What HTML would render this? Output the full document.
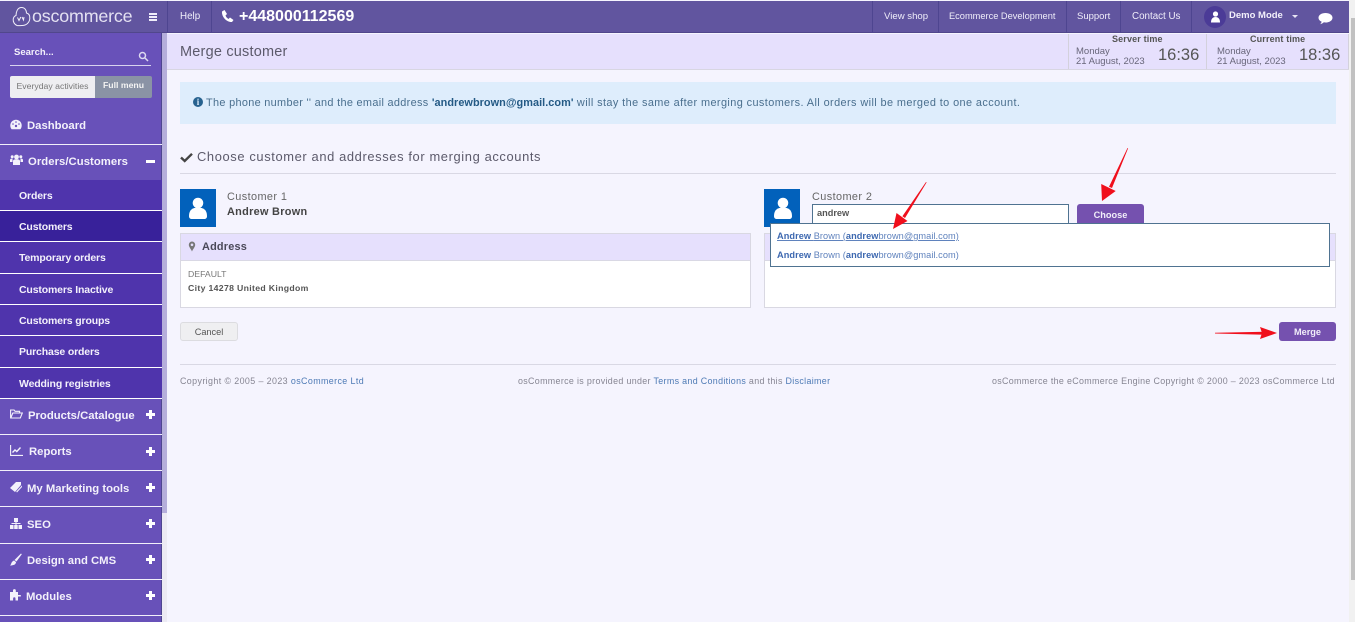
<!DOCTYPE html>
<html><head><meta charset="utf-8"><title>Merge customer</title>
<style>
*{box-sizing:border-box}
html,body{margin:0;padding:0;width:1355px;height:622px;overflow:hidden;background:#f5f4fe;font-family:"Liberation Sans",sans-serif;color:#555}
.a{position:absolute;white-space:nowrap}
#top{left:0;top:1px;width:1349px;height:32px;background:#61559f;border-bottom:1px solid #51478c}
.v{position:absolute;top:1px;width:1px;height:32px;background:#4e4590}
.tl{position:absolute;top:11px;font-size:10px;color:#f0eefa;line-height:12px;white-space:nowrap}
#side{left:0;top:33px;width:162px;height:589px;background:#6851b9;border-right:1px solid #4e4590}
.sub{position:absolute;left:0;width:162px;background:#4f34ac;border-bottom:1px solid #fff;color:#f3f1fb;font-weight:bold;font-size:10.5px;padding:1px 0 0 19px;white-space:nowrap;letter-spacing:-.15px}
.sep{position:absolute;left:0;width:162px;height:1px;background:#f2f0fa}
.mt{position:absolute;left:27px;color:#f3f1fb;font-weight:bold;font-size:11.3px;line-height:14px;white-space:nowrap}
.plus{position:absolute;left:146px;width:9px;height:9px}
.plus:before{content:"";position:absolute;left:0;top:3px;width:9px;height:3px;background:#fff}
.plus:after{content:"";position:absolute;left:3px;top:0;width:3px;height:9px;background:#fff}
.ic{position:absolute;left:10px}
.panel{position:absolute;border:1px solid #d9d8e2;background:#fff}
a,.lk{color:#4d7ab5;text-decoration:none}
.ava{position:absolute;width:36px;height:38px;background:#0261bb}
</style></head><body>

<div class="a" id="top"></div>
<div class="v" style="left:167px"></div><div class="v" style="left:211px"></div>
<div class="v" style="left:872px"></div><div class="v" style="left:938px"></div><div class="v" style="left:1066px"></div><div class="v" style="left:1120px"></div><div class="v" style="left:1191px"></div>

<svg class="a" style="left:12px;top:6px" width="19" height="21" viewBox="0 0 19 21" fill="none" stroke="#f2f0fa" stroke-width="1"><path d="M5 19.500C2.500 18.500 1 16 1.200 13.500C1.400 11.500 2.600 10 4 9.500C4 6 5.500 1.500 9.500 1.500C13 1.500 14.500 4.500 14.500 7C16.800 7.500 18 9.500 17.800 12.500C17.500 16.500 14.500 19.500 10 19.500C8 19.500 6.500 19.800 5 19.500Z"/><path d="M5.500 11.500l1.500 3 1.800-3.500M10 11l1.500 3 .5-3" stroke-width="1"/></svg>
<div class="a" style="left:32px;top:5px;font-size:17.900px;line-height:22px;color:#e4e1f2;letter-spacing:-.2px">oscommerce</div>
<div class="a" style="left:149px;top:13px;width:8px;height:2px;background:#f0eefa"></div>
<div class="a" style="left:149px;top:16px;width:8px;height:2px;background:#f0eefa"></div>
<div class="a" style="left:149px;top:19px;width:8px;height:2px;background:#f0eefa"></div>
<div class="tl" style="left:180px;font-size:9.800px">Help</div>
<svg class="a" style="left:221px;top:9px" width="13" height="14" viewBox="0 0 13 14"><path d="M1 2.500L3.500 1L6 5L4.500 6.500C5 8 6 9 7.500 10L9 8.500L12.500 11L11 13C6 13.500 .5 8 1 2.500Z" fill="#fff"/></svg>
<div class="a" style="left:239px;top:7px;font-size:16px;line-height:19px;font-weight:bold;color:#fff">+448000112569</div>
<div class="tl" style="left:884px;font-size:9.600px">View shop</div>
<div class="tl" style="left:949px;top:10px;font-size:9.250px">Ecommerce Development</div>
<div class="tl" style="left:1077px;font-size:9.500px">Support</div>
<div class="tl" style="left:1132px;font-size:9.800px">Contact Us</div>
<div class="a" style="left:1204px;top:6px;width:22px;height:22px;border-radius:50%;background:#4b3b97"></div>
<svg class="a" style="left:1210px;top:11px" width="11" height="12" viewBox="0 0 11 12"><circle cx="5.500" cy="3" r="2.600" fill="#fff"/><path d="M1 11.500C1 8 2.500 6 5.500 6S10 8 10 11.500Z" fill="#fff"/></svg>
<div class="a" style="left:1229px;top:10px;font-size:9.500px;line-height:12px;font-weight:bold;color:#f3f1fb">Demo Mode</div>
<div class="a" style="left:1292px;top:15px;border:3px solid transparent;border-top:3px solid #e8e5f4"></div>
<svg class="a" style="left:1318px;top:12px" width="15" height="13" viewBox="0 0 15 13"><path d="M7.500 1C11.500 1 14.500 3 14.500 5.700S11.500 10.500 7.500 10.500C6.800 10.500 6.200 10.400 5.800 10.300C4.700 11.300 3.500 12 2.200 12.200C3 11.300 3.500 10.400 3.600 9.600C1.600 8.800 .5 7.400 .5 5.700C.5 3 3.500 1 7.500 1Z" fill="#fff"/></svg>

<div class="a" id="side"></div>
<div class="a" style="left:162px;top:33px;width:5px;height:480px;background:#b5aedb"></div>
<div class="a" style="left:162px;top:513px;width:5px;height:109px;background:#eceaf3"></div>

<div class="a" style="left:14px;top:47px;font-size:9.500px;line-height:12px;font-weight:bold;color:#f3f1fb">Search...</div>
<svg class="a" style="left:138px;top:51px" width="11" height="11" viewBox="0 0 11 11" fill="none" stroke="#ddd9f0" stroke-width="1.500"><circle cx="4.500" cy="4.500" r="3"/><path d="M7 7l3 3"/></svg>
<div class="a" style="left:10px;top:65px;width:141px;height:1px;background:#d8d3ee"></div>
<div class="a" style="left:10px;top:76px;width:85px;height:22px;background:#eeeef1;border-radius:2px 0 0 2px;color:#777;font-size:8.700px;line-height:21px;text-align:center">Everyday activities</div>
<div class="a" style="left:95px;top:76px;width:57px;height:22px;background:#8a93a5;border-radius:0 2px 2px 0;color:#f3f3f3;font-size:8.700px;line-height:19px;text-align:center;font-weight:bold">Full menu</div>

<svg class="ic" style="top:119px" width="12" height="11" viewBox="0 0 12 11"><path d="M6 .8C2.800 .8 .3 3.300 .3 6.500c0 1.500 .5 2.800 1.300 3.700h8.800c.8-.9 1.300-2.200 1.300-3.700C11.700 3.300 9.200 .8 6 .8Z" fill="#f3f1fb"/><circle cx="6" cy="7" r="1.200" fill="#6851b9"/><circle cx="3" cy="5" r=".8" fill="#6851b9"/><circle cx="9" cy="5" r=".8" fill="#6851b9"/><circle cx="6" cy="3" r=".8" fill="#6851b9"/></svg>
<div class="mt" style="top:119px">Dashboard</div>
<div class="sep" style="top:144px"></div>
<svg class="ic" style="top:154px" width="13" height="12" viewBox="0 0 13 12" fill="#f3f1fb"><circle cx="6.500" cy="3" r="2.400"/><circle cx="2.200" cy="2.800" r="1.500"/><circle cx="10.800" cy="2.800" r="1.500"/><path d="M3 11V7c0-1 1-1.800 3.500-1.800S10 6 10 7v4Z"/><path d="M0 8V6c0-1 .8-1.500 2.500-1.500V8ZM13 8V6c0-1-.8-1.500-2.500-1.500V8Z"/></svg>
<div class="mt" style="left:28px;top:155px;letter-spacing:.05px">Orders/Customers</div>
<div class="a" style="left:146px;top:160px;width:9px;height:3px;background:#fff"></div>

<div class="a" style="left:0;top:180px;width:161px;height:218px;background:#4f34ac"></div>
<div class="sub" style="top:180px;height:31px;line-height:30px">Orders</div>
<div class="sub" style="top:211px;height:31px;line-height:30px;background:#38219a">Customers</div>
<div class="sub" style="top:242px;height:32px;line-height:30px">Temporary orders</div>
<div class="sub" style="top:274px;height:31px;line-height:30px">Customers Inactive</div>
<div class="sub" style="top:305px;height:31px;line-height:30px">Customers groups</div>
<div class="sub" style="top:336px;height:32px;line-height:30px">Purchase orders</div>
<div class="sub" style="top:368px;height:31px;line-height:30px">Wedding registries</div>

<svg class="ic" style="top:409px" width="13" height="10" viewBox="0 0 13 10" fill="none" stroke="#f3f1fb" stroke-width="1.100"><path d="M.6 9V1h3.500l1 1.300h4.500V4M.8 9l2-5h9.500l-2 5Z"/></svg>
<div class="mt" style="left:28px;top:409px">Products/Catalogue</div><div class="plus" style="top:410px"></div>
<div class="sep" style="top:434px"></div>
<svg class="ic" style="top:445px" width="13" height="11" viewBox="0 0 13 11" fill="none" stroke="#f3f1fb" stroke-width="1.100"><path d="M.6 0v10.400H13"/><path d="M2.500 7.500L5 5l1.800 1.500L10.500 2.500" stroke-width="1.400"/></svg>
<div class="mt" style="left:29px;top:445px">Reports</div><div class="plus" style="top:447px"></div>
<div class="sep" style="top:470px"></div>
<svg class="ic" style="top:482px" width="12" height="11" viewBox="0 0 12 11" fill="#f3f1fb"><path d="M0 6L6 0h5v3L5 10Z"/><path d="M7 10.500l5-5.500V3.500L6.200 9.600Z"/></svg>
<div class="mt" style="top:482px">My Marketing tools</div><div class="plus" style="top:483px"></div>
<div class="sep" style="top:506px"></div>
<svg class="ic" style="top:518px" width="12" height="11" viewBox="0 0 12 11" fill="#f3f1fb"><rect x="4" y="0" width="4" height="4"/><rect x="0" y="7" width="3.500" height="4"/><rect x="4.200" y="7" width="3.500" height="4"/><rect x="8.500" y="7" width="3.500" height="4"/><rect x="1.500" y="5" width="9" height="1"/><rect x="5.500" y="4" width="1" height="3"/></svg>
<div class="mt" style="top:518px">SEO</div><div class="plus" style="top:519px"></div>
<div class="sep" style="top:543px"></div>
<svg class="ic" style="top:553px" width="12" height="13" viewBox="0 0 12 13" fill="#f3f1fb"><path d="M11 .5l.8 .7L6.500 8.500 4.500 7Z"/><path d="M4 7.500L6 9C6 11.500 3.500 12.500 0 12.500c1.500-1 1-4 4-5Z"/></svg>
<div class="mt" style="top:554px">Design and CMS</div><div class="plus" style="top:555px"></div>
<div class="sep" style="top:579px"></div>
<svg class="ic" style="top:589px" width="11" height="12" viewBox="0 0 11 12" fill="#f3f1fb"><path d="M0 3h3V1.500a1.400 1.400 0 0 1 2.800 0V3H8v3h2.800v1.500H8V11.500H5.500V9.500a1.200 1.200 0 0 0-2.400 0v2H0Z"/></svg>
<div class="mt" style="left:26px;top:590px">Modules</div><div class="plus" style="top:591px"></div>
<div class="sep" style="top:615px"></div>

<div class="a" style="left:167px;top:34px;width:1182px;height:36px;background:#e6e0fd;border-bottom:1px solid #d8d6e2"></div>
<div class="a" style="left:180px;top:43px;font-size:14.500px;line-height:18px;color:#5c5a6b;letter-spacing:.2px">Merge customer</div>
<div class="a" style="left:1068px;top:34px;width:1px;height:35px;background:#d3d1dc"></div>
<div class="a" style="left:1206px;top:34px;width:1px;height:35px;background:#d3d1dc"></div>
<div class="a" style="left:1348px;top:34px;width:1px;height:35px;background:#d3d1dc"></div>
<div class="a" style="left:1112px;top:33px;font-size:9px;line-height:12px;font-weight:bold;color:#555;letter-spacing:.15px">Server time</div>
<div class="a" style="left:1250px;top:33px;font-size:9px;line-height:12px;font-weight:bold;color:#555;letter-spacing:.15px">Current time</div>
<div class="a" style="left:1076px;top:47px;font-size:9.500px;line-height:10px;color:#68667a">Monday<br>21 August, 2023</div>
<div class="a" style="left:1217px;top:47px;font-size:9.500px;line-height:10px;color:#68667a">Monday<br>21 August, 2023</div>
<div class="a" style="left:1158px;top:46px;font-size:16.500px;line-height:19px;color:#555">16:36</div>
<div class="a" style="left:1299px;top:46px;font-size:16.500px;line-height:19px;color:#555">18:36</div>

<div class="a" style="left:180px;top:82px;width:1156px;height:42px;background:#deedfc"></div>
<div class="a" style="left:193px;top:97px;width:10px;height:10px;border-radius:50%;background:#27628f;color:#deedfc;font:bold 9px/10px 'Liberation Serif',serif;text-align:center">i</div>
<div class="a" style="left:206px;top:96px;font-size:10.900px;line-height:14px;color:#4a6f8e;letter-spacing:.32px">The phone number '' and the email address <b style="color:#245a85;letter-spacing:.05px">'andrewbrown@gmail.com'</b><span style="letter-spacing:.41px"> will stay the same after merging customers. All orders will be merged to one account.</span></div>

<svg class="a" style="left:180px;top:152px" width="13" height="11" viewBox="0 0 13 11"><path d="M1 5.500L4.700 9 12 1.800" fill="none" stroke="#444" stroke-width="2.400"/></svg>
<div class="a" style="left:197px;top:148px;font-size:12.900px;line-height:17px;color:#5c5a6b;letter-spacing:.62px">Choose customer and addresses for merging accounts</div>
<div class="a" style="left:180px;top:173px;width:1156px;height:1px;background:#d9d8e4"></div>

<div class="ava" style="left:180px;top:189px"></div>
<svg class="a" style="left:188px;top:197px" width="20" height="23" viewBox="0 0 20 23" fill="#fff"><circle cx="10" cy="6" r="5.300"/><path d="M1 19c0-6 3.500-8.500 9-8.500s9 2.500 9 8.500c0 2-1 3-3 3H4c-2 0-3-1-3-3Z"/></svg>
<div class="a" style="left:227px;top:191px;font-size:10.900px;line-height:13px;color:#666;letter-spacing:.4px">Customer 1</div>
<div class="a" style="left:227px;top:206px;font-size:10.900px;line-height:13px;font-weight:bold;color:#444;letter-spacing:.3px">Andrew Brown</div>

<div class="panel" style="left:180px;top:233px;width:571px;height:75px"></div>
<div class="a" style="left:181px;top:234px;width:569px;height:27px;background:#e6e0fd;border-bottom:1px solid #d9d8e4"></div>
<svg class="a" style="left:188px;top:241px" width="8" height="11" viewBox="0 0 8 11"><path d="M4 .5A3.300 3.300 0 0 0 .8 3.800C.8 6 3 8 4 10.500 5 8 7.200 6 7.200 3.800A3.300 3.300 0 0 0 4 .5Z" fill="#777"/><circle cx="4" cy="3.800" r="1.300" fill="#e6e0fd"/></svg>
<div class="a" style="left:202px;top:240px;font-size:10.900px;line-height:14px;font-weight:bold;color:#4a4858;letter-spacing:.2px">Address</div>
<div class="a" style="left:188px;top:269px;font-size:8.700px;line-height:11px;color:#777">DEFAULT</div>
<div class="a" style="left:188px;top:283px;font-size:8.700px;line-height:11px;font-weight:bold;color:#555;letter-spacing:.33px">City 14278 United Kingdom</div>

<div class="ava" style="left:764px;top:189px"></div>
<svg class="a" style="left:773px;top:197px" width="20" height="23" viewBox="0 0 20 23" fill="#fff"><circle cx="10" cy="6" r="5.300"/><path d="M1 19c0-6 3.500-8.500 9-8.500s9 2.500 9 8.500c0 2-1 3-3 3H4c-2 0-3-1-3-3Z"/></svg>
<div class="a" style="left:812px;top:191px;font-size:10.900px;line-height:13px;color:#666;letter-spacing:.4px">Customer 2</div>
<div class="a" style="left:812px;top:204px;width:257px;height:20px;background:#fff;border:1px solid #4f7391"></div>
<div class="a" style="left:817px;top:207px;font-size:9.200px;line-height:12px;font-weight:bold;color:#555">andrew</div>
<div class="a" style="left:1077px;top:204px;width:67px;height:22px;background:#7551af;border-radius:3px;color:#f1eef9;font-size:9.200px;font-weight:bold;line-height:23px;text-align:center">Choose</div>

<div class="panel" style="left:764px;top:233px;width:572px;height:75px"></div>
<div class="a" style="left:765px;top:234px;width:570px;height:27px;background:#e6e0fd;border-bottom:1px solid #d9d8e4"></div>
<div class="a" style="left:770px;top:223px;width:560px;height:44px;background:#fff;border:1px solid #4f7391"></div>
<div class="a lk" style="left:777px;top:230px;font-size:9.200px;line-height:12px;text-decoration:underline;color:#5f82bd;letter-spacing:.07px"><b style="color:#3d68b0">Andrew </b> Brown (<b style="color:#3d68b0">andrew</b>brown@gmail.com)</div>
<div class="a lk" style="left:777px;top:249px;font-size:9.200px;line-height:12px;color:#5f82bd;letter-spacing:.07px"><b style="color:#3d68b0">Andrew </b> Brown (<b style="color:#3d68b0">andrew</b>brown@gmail.com)</div>

<div class="a" style="left:180px;top:322px;width:58px;height:19px;background:#efeff1;border:1px solid #dcdce0;border-radius:3px;color:#555;font-size:9.200px;line-height:19px;text-align:center">Cancel</div>
<div class="a" style="left:1279px;top:322px;width:57px;height:19px;background:#7551af;border-radius:3px;color:#f1eef9;font-size:9.200px;font-weight:bold;line-height:21px;text-align:center">Merge</div>

<div class="a" style="left:180px;top:364px;width:1156px;height:1px;background:#d9d8e4"></div>
<div class="a" style="left:180px;top:375px;font-size:8.900px;line-height:12px;color:#868592;letter-spacing:.4px">Copyright © 2005 – 2023 <span class="lk">osCommerce Ltd</span></div>
<div class="a" style="left:518px;top:375px;font-size:8.900px;line-height:12px;color:#868592;letter-spacing:.34px">osCommerce is provided under <span class="lk">Terms and Conditions</span> and this <span class="lk">Disclaimer</span></div>
<div class="a" style="left:992px;top:375px;font-size:8.900px;line-height:12px;color:#868592;letter-spacing:.33px">osCommerce the eCommerce Engine Copyright © 2000 – 2023 osCommerce Ltd</div>

<div class="a" style="left:1349px;top:0;width:6px;height:622px;background:#f1f1f1"></div>
<div class="a" style="left:1351px;top:18px;width:4px;height:562px;background:#c1c1c1"></div>

<svg class="a" style="left:0;top:0" width="1355" height="622" viewBox="0 0 1355 622">
<g fill="#f00f1c" stroke="none">
<path d="M1127.500 148l.6 .3L1112 188l-3-1.300Z"/><path d="M1102 201l-.8-17 14.500 7Z"/>
<path d="M926 182l.6 .4L905 218l-2.600-1.800Z"/><path d="M893 229l3.500-16 11 8Z"/>
<path d="M1215 332.700l50-1v3l-50-1.200Z"/><path d="M1277 333l-17-6 2 6-2 6Z"/>
</g></svg>
</body></html>
